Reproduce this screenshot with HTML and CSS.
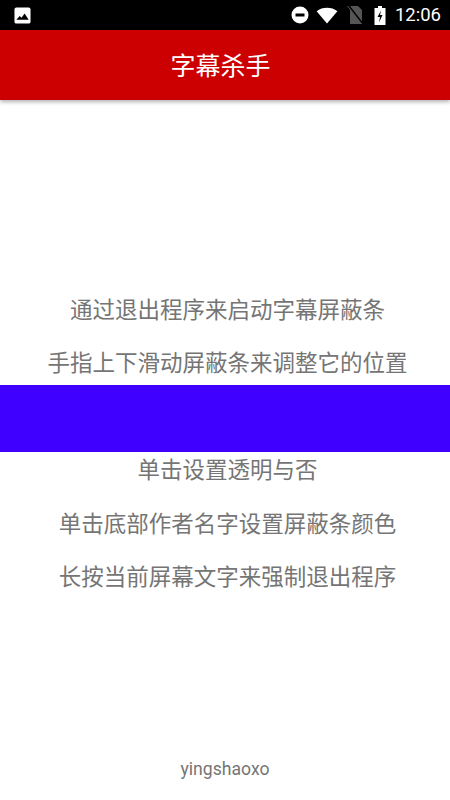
FILE: index.html
```html
<!DOCTYPE html>
<html lang="zh">
<head>
<meta charset="utf-8">
<title>字幕杀手</title>
<link rel="stylesheet" href="styles.css">
</head>
<body>
<div class="status">
  <svg class="ic-photo" viewBox="0 0 18 18" width="17" height="17"><path fill="#fff" d="M2.5 0.5h13a2 2 0 0 1 2 2v13a2 2 0 0 1-2 2h-13a2 2 0 0 1-2-2v-13a2 2 0 0 1 2-2z"/><path fill="#000" d="M2.5 13.5 6 9.5l2 2L11.2 7 15.5 13.5z"/></svg>
  <div class="status-right">
    <svg class="ic-dnd" viewBox="0 0 18 18" width="18" height="18"><circle cx="9" cy="9" r="8.5" fill="#fff"/><rect x="4.5" y="7.5" width="9" height="3" fill="#000"/></svg>
    <svg class="ic-wifi" viewBox="0 0 22 18" width="22" height="17"><path fill="#fff" d="M0 4.5C3 2 7 .8 11 .8s8 1.2 11 3.7L11 17.5z"/></svg>
    <svg class="ic-sim" viewBox="0 0 16 18" width="16" height="18"><path fill="#555" d="M3 0h8l4 4v14H3z"/><path stroke="#000" stroke-width="1.6" d="M2 0l14 18"/><path stroke="#555" stroke-width="1" d="M0.5 0l14 18"/></svg>
    <svg class="ic-batt" viewBox="0 0 12 19" width="12" height="19"><path fill="#fff" d="M4 0h4v2h3.5v17H.5V2H4z"/><path fill="#000" d="M7 4.5 3.5 11H6l-1 5.5 3.5-7.5H6z"/></svg>
    <span class="clock">12:06</span>
  </div>
</div>
<header class="bar"><span class="title">字幕杀手</span></header>
<main class="content">
  <p class="line">通过退出程序来启动字幕屏蔽条</p>
  <p class="line">手指上下滑动屏蔽条来调整它的位置</p>
  <p class="line">单击屏蔽条来隐藏</p>
  <p class="line">单击设置透明与否</p>
  <p class="line">单击底部作者名字设置屏蔽条颜色</p>
  <p class="line">长按当前屏幕文字来强制退出程序</p>
</main>
<div class="blocker"></div>
<footer class="author">yingshaoxo</footer>
</body>
</html>
```
FILE: styles.css
```css
* { box-sizing: border-box; }
html, body { margin: 0; padding: 0; }
body {
  position: relative;
  width: 450px;
  height: 800px;
  overflow: hidden;
  background: #fff;
  display: flex;
  flex-direction: column;
  font-family: Roboto, "Noto Sans CJK SC", sans-serif;
}
.status {
  height: 30px;
  background: #000;
  display: flex;
  align-items: center;
  justify-content: space-between;
  padding: 0 9px 0 14px;
  flex: none;
}
.status-right { display: flex; align-items: center; }
.ic-wifi { margin-left: 7px; }
.ic-sim { margin-left: 9px; }
.ic-batt { margin-left: 11px; }
.clock { color: #fff; font-size: 18.5px; margin-left: 9px; }
.bar {
  height: 70px;
  flex: none;
  background: #cc0000;
  color: #fff;
  font-size: 25px;
  display: flex;
  align-items: center;
  justify-content: center;
  padding: 0 9px 3px 0;
  box-shadow: 0 2px 4px rgba(0,0,0,.3);
}
.content {
  flex: 1;
  padding: 184px 0 0 5px;
}
.line {
  margin: 0;
  height: 53.4px;
  line-height: 53.4px;
  text-align: center;
  font-size: 22.5px;
  color: #757575;
}
.blocker {
  position: absolute;
  left: 0;
  top: 385px;
  width: 100%;
  height: 66.5px;
  background: #4000ff;
}
.author {
  flex: none;
  height: 40px;
  text-align: center;
  font-size: 17.6px;
  line-height: 19px;
  color: #757575;
}
```
